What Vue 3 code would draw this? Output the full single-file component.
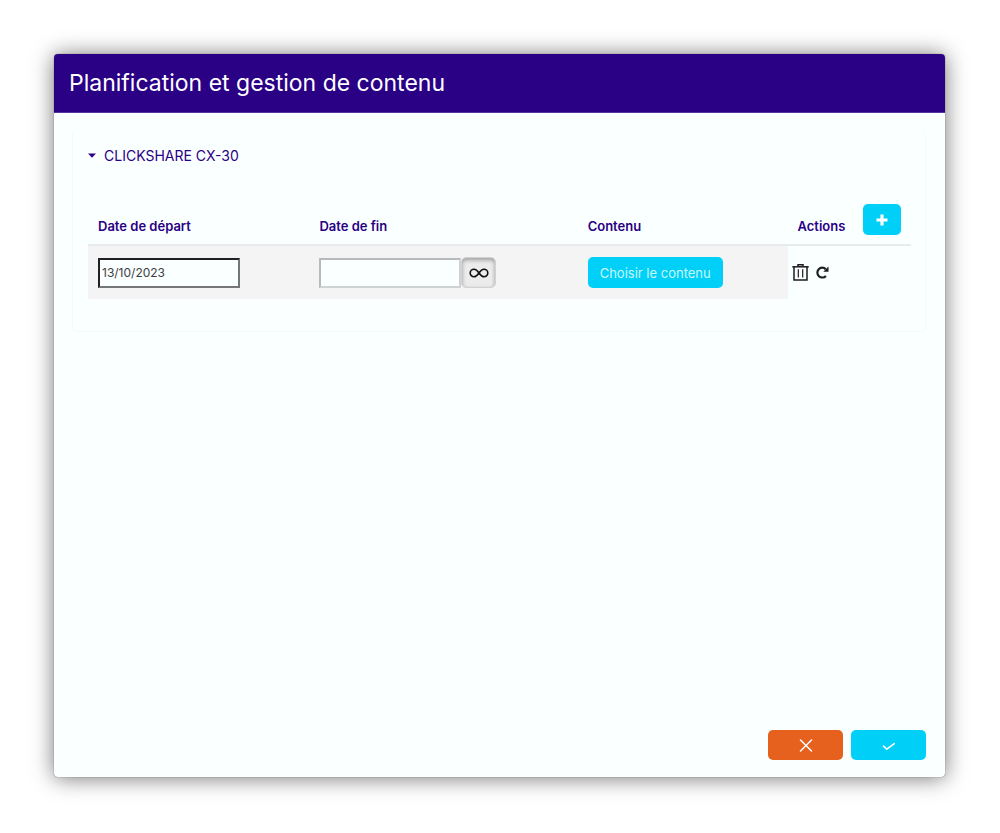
<script setup>
import { ref } from 'vue'

const open = ref(true)
const startDate = ref('13/10/2023')
const endDate = ref('')
</script>

<template>
  <main class="page">
    <section class="dialog" role="dialog" aria-labelledby="dialog-title">
      <header class="dialog-header">
        <h1 id="dialog-title">Planification et gestion de contenu</h1>
      </header>

      <div class="dialog-body">
        <section class="card">
          <button class="card-toggle" type="button" :aria-expanded="open" @click="open = !open">
            <svg class="caret" viewBox="0 0 8 7" aria-hidden="true"><path d="M0 0.5h8L4 4.8z" fill="currentColor" /></svg>
            <span>CLICKSHARE CX-30</span>
          </button>

          <table v-show="open" class="schedule">
            <colgroup>
              <col class="col-start" />
              <col class="col-end" />
              <col class="col-content" />
              <col />
            </colgroup>
            <thead>
              <tr>
                <th scope="col" id="h-start">Date de départ</th>
                <th scope="col" id="h-end">Date de fin</th>
                <th scope="col">Contenu</th>
                <th scope="col">
                  <div class="actions-head">
                    <span>Actions</span>
                    <button class="btn btn-add" type="button" aria-label="Ajouter">
                      <svg viewBox="0 0 12 12" width="12" height="12" aria-hidden="true"><path d="M4.4 0.5h3.2v3.9h3.9v3.2H7.6v3.9H4.4V7.6H0.5V4.4h3.9z" fill="currentColor" /></svg>
                    </button>
                  </div>
                </th>
              </tr>
            </thead>
            <tbody>
              <tr>
                <td><input v-model="startDate" class="date" type="text" aria-labelledby="h-start" /></td>
                <td>
                  <div class="end-date">
                    <input v-model="endDate" class="date date-muted" type="text" aria-labelledby="h-end" />
                    <button class="infinity" type="button" aria-label="Sans date de fin">
                      <svg viewBox="0 0 20 10" width="20" height="10" aria-hidden="true">
                        <path d="M10 5C8.2 2.3 6.9 1.2 5 1.2a3.8 3.8 0 0 0 0 7.6C6.9 8.8 8.2 7.7 10 5S13.1 1.2 15 1.2a3.8 3.8 0 0 1 0 7.6C13.1 8.8 11.8 7.7 10 5z" fill="none" stroke="currentColor" stroke-width="1.6" />
                      </svg>
                    </button>
                  </div>
                </td>
                <td><button class="btn btn-choose" type="button">Choisir le contenu</button></td>
                <td class="row-actions">
                  <div class="icons">
                    <button class="icon-btn" type="button" aria-label="Supprimer">
                      <svg viewBox="0 0 17 17" width="17" height="17" aria-hidden="true" fill="none" stroke="currentColor">
                        <path d="M0.3 2.8h16.4" stroke-width="1.5" />
                        <path d="M6 2.5V0.8h5v1.7M2 3v12.9h13V3" stroke-width="1.5" />
                        <path d="M6.300 5.200v8.300M10.700 5.200v8.300" stroke-width="1.2" />
                      </svg>
                    </button>
                    <button class="icon-btn" type="button" aria-label="Réinitialiser">
                      <svg viewBox="0 0 13 13" width="13" height="13" aria-hidden="true">
                        <path d="M9.9 9.9A4.9 4.9 0 1 1 9.7 3.1" fill="none" stroke="currentColor" stroke-width="2.2" />
                        <path d="M12.5 0.6v5.2H7.3z" fill="currentColor" />
                      </svg>
                    </button>
                  </div>
                </td>
              </tr>
            </tbody>
          </table>
        </section>
      </div>

      <footer class="dialog-footer">
        <button class="btn btn-action btn-cancel" type="button" aria-label="Annuler">
          <svg viewBox="0 0 14 14" width="14" height="14" aria-hidden="true"><path d="M1.5 2l11 11M12.5 2l-11 11" fill="none" stroke="currentColor" stroke-width="1.5" stroke-linecap="round" /></svg>
        </button>
        <button class="btn btn-action" type="button" aria-label="Valider">
          <svg viewBox="0 0 14 14" width="14" height="14" aria-hidden="true"><path d="M1.5 8.2l3.3 3 7.5-5.6" fill="none" stroke="currentColor" stroke-width="1.6" stroke-linecap="round" stroke-linejoin="round" /></svg>
        </button>
      </footer>
    </section>
  </main>
</template>

<style>
body {
  background: #fff;
}
</style>

<style scoped>
.page,
.page * {
  box-sizing: border-box;
}
.page {
  display: flex;
  min-height: 100vh;
  padding: 54px 55px 56px 54px;
  font-family: Inter, "Open Sans", sans-serif;
  font-size: 13px;
  line-height: 20px;
  color: #2a0085;
}
button,
input {
  font: inherit;
}
button {
  padding: 0;
  border: 0;
  cursor: pointer;
}
svg {
  display: block;
}
.dialog {
  flex: 1;
  display: flex;
  flex-direction: column;
  min-width: 0;
  background: #faffff;
  border-radius: 4px;
  box-shadow: 0 0 1px rgba(0, 0, 0, 0.7), 0 1px 22px rgba(0, 0, 0, 0.55);
}
.dialog-header {
  padding: 15px 15px 14px;
  background: #2a0085;
  border-bottom: 1px solid #55339d;
  border-radius: 4px 4px 0 0;
}
h1 {
  margin: 0;
  color: #fff;
  font-size: 23px;
  font-weight: 400;
  line-height: 29px;
}
.dialog-body {
  flex: 1;
  padding: 18px 19px 18px 18px;
}
.card {
  padding: 14px 14px 32px 15px;
  border: 1px solid #f4f9f9;
  border-top-color: #f8fdfd;
  border-radius: 5px;
}
.card-toggle {
  display: flex;
  align-items: center;
  gap: 8px;
  margin-bottom: 38px;
  background: none;
  color: #2a0085;
  font-size: 14px;
}
.caret {
  width: 8px;
  height: 7px;
}
.schedule {
  width: 100%;
  table-layout: fixed;
  border-collapse: collapse;
}
.col-start {
  width: 26.9%;
}
.col-end {
  width: 32.6%;
}
.col-content {
  width: 25.5%;
}
th {
  padding: 0 10px 8px;
  border-bottom: 2px solid #e8ebeb;
  text-align: left;
  vertical-align: bottom;
  font-size: 13px;
  font-weight: 600;
}
td {
  height: 54px;
  padding: 0 10px;
  background: #f4f4f4;
  vertical-align: middle;
}
.row-actions {
  padding: 0 4px;
  background: none;
}
.actions-head {
  display: flex;
  align-items: flex-end;
  justify-content: space-between;
}
.btn {
  display: inline-flex;
  align-items: center;
  justify-content: center;
  height: 31px;
  border-radius: 5px;
  background: #00d0f7;
  color: #fff;
}
.btn-add {
  width: 38px;
  margin-bottom: 1px;
}
.btn-choose {
  display: flex;
  padding: 0 12px;
  color: #c9f7fd;
  font-size: 13px;
}
.date {
  display: block;
  width: 142px;
  height: 30px;
  padding: 0 2px;
  border: 2px solid;
  border-color: #1f1f24 #747678 #747678 #1f1f24;
  border-radius: 0;
  background: #faffff;
  color: #3b3e42;
  font-size: 12px;
  outline: none;
}
.date-muted {
  border-color: #b6baba #cfd3d3 #cfd3d3 #b6baba;
}
.end-date {
  display: flex;
  align-items: center;
}
.infinity {
  display: flex;
  align-items: center;
  justify-content: center;
  width: 35px;
  height: 31px;
  border: 1px solid #d2d2d2;
  border-radius: 5px;
  background: #ececec;
  box-shadow: inset 0 2px 4px rgba(0, 0, 0, 0.35);
  color: #111;
}
.icons {
  display: flex;
  align-items: center;
  gap: 7px;
}
.icon-btn {
  background: none;
  color: #1c1c20;
}
.dialog-footer {
  display: flex;
  justify-content: flex-end;
  gap: 8px;
  padding: 0 19px 17px;
}
.btn-action {
  width: 75px;
  height: 30px;
}
.btn-cancel {
  background: #e6611e;
}
</style>
